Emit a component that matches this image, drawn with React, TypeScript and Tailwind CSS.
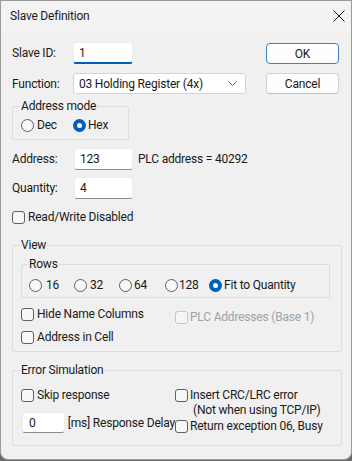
import React from "react";

const Radio = ({ checked = false }: { checked?: boolean }) =>
  checked ? (
    <span className="w-[13px] h-[13px] rounded-full bg-[#005fb8] flex items-center justify-center shrink-0">
      <span className="w-[5px] h-[5px] rounded-full bg-white" />
    </span>
  ) : (
    <span className="w-[13px] h-[13px] rounded-full border border-[#5f5f5f] bg-[#f7f7f7] shrink-0" />
  );

const Check = ({ disabled = false }: { disabled?: boolean }) => (
  <span
    className={
      disabled
        ? "w-[13px] h-[13px] rounded-[3px] border border-[#c6c6c6] bg-[#f5f5f5] shrink-0"
        : "w-[13px] h-[13px] rounded-[3px] border border-[#5f5f5f] bg-[#f7f7f7] shrink-0"
    }
  />
);

const TextBox = ({ value, width, focused = false }: { value: string; width: string; focused?: boolean }) => (
  <div
    className={
      focused
        ? `${width} h-[22px] bg-white border border-[#ececec] border-b-2 border-b-[#005fb8] rounded-[3px] pl-[5px] flex items-center`
        : `${width} h-[22px] bg-white border border-[#ececec] border-b-[#8d8d8d] rounded-[3px] pl-[5px] flex items-center`
    }
  >
    {value}
  </div>
);

const App = () => {
  return (
    <div className="w-[352px] h-[461px] bg-[#6c6c6c]">
      <div className="w-[352px] h-[460px] bg-[#f0f0f0] border border-[#9a9a9a] rounded-b-[8px] overflow-hidden font-['Segoe_UI','Roboto',sans-serif] text-[12px] leading-[16px] tracking-[-0.2px] text-[#1a1a1a]">
        {/* Title bar */}
        <div className="h-[30px] bg-[#f3f3f3] flex items-center justify-between pl-[9px] pr-[5px]">
          <span className="text-[12px]">Slave Definition</span>
          <svg width="12" height="12" viewBox="0 0 12 12" className="mr-[1px]">
            <path d="M0.5 0.5 L11.5 11.5 M11.5 0.5 L0.5 11.5" stroke="#1a1a1a" strokeWidth="1" fill="none" />
          </svg>
        </div>

        <div className="pl-[11px]">
          <div className="flex">
            {/* Left column */}
            <div className="flex-1">
              <div className="mt-[11px] h-[22px] flex items-center">
                <span className="w-[61px]">Slave ID:</span>
                <TextBox value="1" width="w-[60px]" focused />
              </div>
              <div className="mt-[9px] h-[21px] flex items-center">
                <span className="w-[61px]">Function:</span>
                <div className="w-[173px] h-[21px] bg-white border border-[#d5d5d5] rounded-[3px] pl-[5px] pr-[8px] flex items-center justify-between">
                  <span>03 Holding Register (4x)</span>
                  <svg width="9" height="5" viewBox="0 0 9 5">
                    <path d="M0.5 0.5 L4.5 4.5 L8.5 0.5" stroke="#606060" strokeWidth="1" fill="none" />
                  </svg>
                </div>
              </div>

              <fieldset className="mt-[4px] w-[117px] h-[42px] border border-[#dcdcdc] rounded-[2px] pl-[8px]">
                <legend className="px-[1px] -ml-[1px]">Address mode</legend>
                <div className="mt-[3px] flex items-center">
                  <div className="w-[52px] flex items-center gap-[3px]">
                    <Radio />
                    <span>Dec</span>
                  </div>
                  <div className="flex items-center gap-[2px]">
                    <Radio checked />
                    <span>Hex</span>
                  </div>
                </div>
              </fieldset>

              <div className="mt-[8px] h-[22px] flex items-center">
                <span className="w-[62px]">Address:</span>
                <TextBox value="123" width="w-[59px]" />
                <span className="ml-[5px]">PLC address = 40292</span>
              </div>
              <div className="mt-[7px] h-[22px] flex items-center">
                <span className="w-[62px]">Quantity:</span>
                <TextBox value="4" width="w-[59px]" />
              </div>
              <div className="mt-[10px] h-[16px] flex items-center gap-[3px]">
                <Check />
                <span>Read/Write Disabled</span>
              </div>
            </div>

            {/* Buttons */}
            <div className="w-[73px] mr-[12px] mt-[12px] flex flex-col gap-[9px]">
              <div className="h-[21px] bg-[#fdfdfd] border border-[#3b82c8] rounded-[4px] flex items-center justify-center">
                OK
              </div>
              <div className="h-[21px] bg-[#fdfdfd] border border-[#d2d2d2] border-b-[#bdbdbd] rounded-[4px] flex items-center justify-center">
                Cancel
              </div>
            </div>
          </div>

          {/* View */}
          <fieldset className="mt-[12px] w-[330px] h-[115px] border border-[#dcdcdc] rounded-[2px] pl-[8px]">
            <legend className="px-[1px] -ml-[1px]">View</legend>
            <fieldset className="mt-[3px] w-[309px] h-[42px] border border-[#dcdcdc] rounded-[2px] pl-[7px]">
              <legend className="px-[1px] -ml-[1px]">Rows</legend>
              <div className="mt-[5px] flex items-center">
                <div className="w-[45px] flex items-center gap-[4px]">
                  <Radio />
                  <span>16</span>
                </div>
                <div className="w-[45px] flex items-center gap-[3px]">
                  <Radio />
                  <span>32</span>
                </div>
                <div className="w-[46px] flex items-center gap-[2px]">
                  <Radio />
                  <span>64</span>
                </div>
                <div className="w-[44px] flex items-center gap-[1px]">
                  <Radio />
                  <span>128</span>
                </div>
                <div className="flex items-center gap-[2px]">
                  <Radio checked />
                  <span>Fit to Quantity</span>
                </div>
              </div>
            </fieldset>
            <div className="flex">
              <div className="w-[154px]">
                <div className="mt-[8px] h-[16px] flex items-center gap-[3px]">
                  <Check />
                  <span>Hide Name Columns</span>
                </div>
                <div className="mt-[7px] h-[16px] flex items-center gap-[3px]">
                  <Check />
                  <span>Address in Cell</span>
                </div>
              </div>
              <div className="mt-[11px] h-[16px] flex items-center gap-[2px] text-[#a2a2a2]">
                <Check disabled />
                <span>PLC Addresses (Base 1)</span>
              </div>
            </div>
          </fieldset>

          {/* Error Simulation */}
          <fieldset className="mt-[10px] w-[330px] h-[84px] border border-[#dcdcdc] rounded-[2px] pl-[8px]">
            <legend className="px-[1px] -ml-[1px]">Error Simulation</legend>
            <div className="flex">
              <div className="w-[154px]">
                <div className="mt-[9px] h-[16px] flex items-center gap-[3px]">
                  <Check />
                  <span>Skip response</span>
                </div>
                <div className="mt-[9px] h-[21px] flex items-center">
                  <div className="ml-[1px] w-[46px] h-[21px] bg-white border border-[#ececec] border-b-[#8d8d8d] rounded-[3px] pl-[6px] flex items-center">
                    0
                  </div>
                  <span className="ml-[3px] whitespace-nowrap">[ms] Response Delay</span>
                </div>
              </div>
              <div>
                <div className="mt-[9px] h-[16px] flex items-center gap-[2px]">
                  <Check />
                  <span>Insert CRC/LRC error</span>
                </div>
                <div className="h-[14px] pl-[18px] flex items-center">(Not when using TCP/IP)</div>
                <div className="mt-[1px] h-[16px] flex items-center gap-[2px]">
                  <Check />
                  <span>Return exception 06, Busy</span>
                </div>
              </div>
            </div>
          </fieldset>
        </div>
      </div>
    </div>
  );
};

export default App;
